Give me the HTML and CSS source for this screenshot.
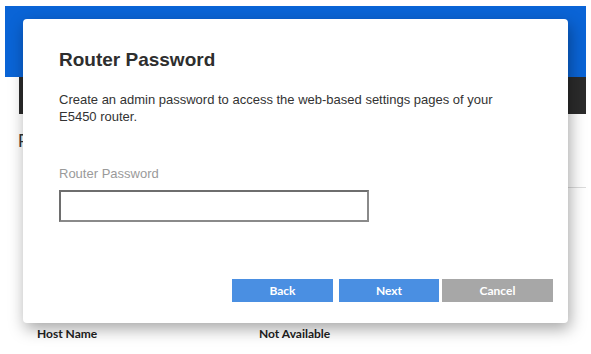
FILE: index.html
```html
<!DOCTYPE html>
<html lang="en">
<head>
  <meta charset="UTF-8">
  <title>Router Password</title>
  <meta name="viewport" content="width=device-width, initial-scale=1.0">
  <link rel="stylesheet" href="styles.css">
</head>
<body>
  <div class="page">
    <div class="topbar"></div>
    <div class="navbar"></div>
    <div class="content">
      <div class="page-title">Firmware Update</div>
      <div class="divider"></div>
      <div class="info-row">
        <span class="info-label">Host Name</span>
        <span class="info-value">Not Available</span>
      </div>
    </div>
  </div>

  <div class="modal">
    <div class="modal-title">Router Password</div>
    <p class="modal-text">Create an admin password to access the web-based settings pages of your E5450 router.</p>
    <label class="field-label" for="routerPass">Router Password</label>
    <input class="field-input" type="password" id="routerPass">
    <div class="modal-actions">
      <button class="btn btn-back" type="button">Back</button>
      <button class="btn btn-next" type="button">Next</button>
      <button class="btn btn-cancel" type="button">Cancel</button>
    </div>
  </div>
</body>
</html>
```

FILE: styles.css
```css
body {
  margin: 0;
  padding: 6px 5px 0 5px;
  background: #fff;
  font-family: 'Liberation Sans', Arial, sans-serif;
  overflow: hidden;
}
.page {
  width: 581px;
}
.topbar {
  height: 71px;
  background: #0a64d6;
}
.navbar {
  height: 37px;
  margin-left: 14px;
  background: #2b2b2b;
}
.content {
  padding-left: 13px;
}
.page-title {
  margin-top: 16px;
  font-size: 18px;
  line-height: 22px;
  color: #333;
}
.divider {
  margin-top: 35px;
  margin-left: 20px;
  height: 1px;
  background: #dcdcdc;
}
.info-row {
  display: flex;
  margin-top: 138px;
  padding-left: 19px;
  font-family: Lato, 'Open Sans', sans-serif;
  font-weight: 700;
  font-size: 12px;
  line-height: 15px;
  color: #222;
}
.info-label {
  width: 222px;
}

/* Dialog lying over the page */
.modal {
  position: absolute;
  left: 23px;
  top: 19px;
  width: 545px;
  height: 304px;
  box-sizing: border-box;
  padding: 30px 15px 21px 36px;
  background: #fff;
  border-radius: 4px;
  box-shadow: 2px 6px 16px rgba(0,0,0,0.35);
  display: flex;
  flex-direction: column;
}
.modal-title {
  font-size: 19px;
  font-weight: 700;
  line-height: 22px;
  color: #2e2e2e;
}
.modal-text {
  margin: 20px 0 0 0;
  max-width: 450px;
  font-size: 13px;
  line-height: 17px;
  color: #333;
}
.field-label {
  margin-top: 40px;
  font-size: 13px;
  line-height: 17px;
  color: #9a9a9a;
}
.field-input {
  margin-top: 8px;
  width: 310px;
  height: 32px;
  box-sizing: border-box;
  border: 2px solid #6e6e6e;
  border-right-color: #8a8a8a;
  border-bottom-color: #8a8a8a;
  outline: none;
  padding: 0 8px;
}
.modal-actions {
  margin-top: auto;
  display: flex;
  justify-content: flex-end;
}
.btn {
  height: 23px;
  border: none;
  padding: 0;
  color: #fff;
  font-family: Lato, 'Open Sans', sans-serif;
  font-weight: 700;
  font-size: 12px;
  cursor: pointer;
}
.btn-back {
  width: 101px;
  background: #4a8fe2;
}
.btn-next {
  width: 100px;
  margin-left: 6px;
  background: #4a8fe2;
}
.btn-cancel {
  width: 111px;
  margin-left: 3px;
  background: #a7a7a7;
}
```
